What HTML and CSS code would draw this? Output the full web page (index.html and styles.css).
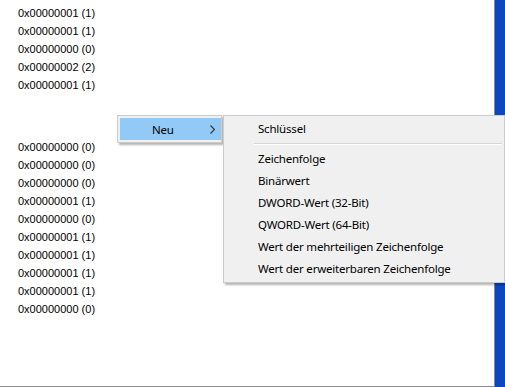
FILE: index.html
```html
<!DOCTYPE html>
<html lang="de">

<head>
    <meta charset="UTF-8">
    <title>Registrierungs-Editor</title>
    <link rel="stylesheet" href="styles.css">
</head>

<body>
    <div class="window">
        <div class="pane">
            <ul class="values">
                <li>0x00000001 (1)</li>
                <li>0x00000001 (1)</li>
                <li>0x00000000 (0)</li>
                <li>0x00000002 (2)</li>
                <li>0x00000001 (1)</li>
            </ul>
            <ul class="values second">
                <li>0x00000000 (0)</li>
                <li>0x00000000 (0)</li>
                <li>0x00000000 (0)</li>
                <li>0x00000001 (1)</li>
                <li>0x00000000 (0)</li>
                <li>0x00000001 (1)</li>
                <li>0x00000001 (1)</li>
                <li>0x00000001 (1)</li>
                <li>0x00000001 (1)</li>
                <li>0x00000000 (0)</li>
            </ul>

            <div class="menu menu-new">
                <div class="item active">
                    <span class="label">Neu</span>
                    <svg class="arrow" width="5" height="9" viewBox="0 0 5 9">
                        <path d="M0.5 0.5 L4.5 4.5 L0.5 8.5" fill="none" stroke="#333" stroke-width="1.1"/>
                    </svg>
                </div>
            </div>

            <div class="menu submenu">
                <div class="item">Schlüssel</div>
                <div class="separator"></div>
                <div class="item">Zeichenfolge</div>
                <div class="item">Binärwert</div>
                <div class="item">DWORD-Wert (32-Bit)</div>
                <div class="item">QWORD-Wert (64-Bit)</div>
                <div class="item">Wert der mehrteiligen Zeichenfolge</div>
                <div class="item">Wert der erweiterbaren Zeichenfolge</div>
            </div>
        </div>
        <div class="side"></div>
    </div>
</body>

</html>
```

FILE: styles.css
```css
body {
    margin: 0;
    background-color: #fff;
    font-family: "Liberation Sans", Arial, sans-serif;
}

.window {
    display: flex;
    width: 505px;
    height: 387px;
    overflow: hidden;
}

.pane {
    position: relative;
    width: 494px;
    height: 386px;
    border-right: 1px solid #8a8a8a;
    border-bottom: 1px solid #8a8a8a;
    background-color: #fff;
}

.side {
    flex: 1;
    background-color: #0b47bd;
}

.values {
    list-style: none;
    margin: 0;
    padding: 4px 0 0 18px;
    font-size: 11px;
    line-height: 18px;
    color: #000;
}

.values.second {
    padding-top: 44px;
}

.menu {
    position: absolute;
    background-color: #f0f0f0;
    border: 1px solid #cccccc;
    box-shadow: 2px 2px 2px rgba(0, 0, 0, 0.3);
    font-family: "Segoe UI", "Noto Sans", sans-serif;
    font-size: 11.5px;
    letter-spacing: -0.2px;
    color: #000;
    padding: 2px;
}

.menu-new {
    left: 117px;
    top: 115px;
    width: 101px;
    padding-right: 0;
}

.menu-new .item {
    display: flex;
    align-items: center;
    height: 22px;
    background-color: #91c9f7;
}

.menu-new .label {
    margin-left: 32px;
    flex: 1;
}

.menu-new .arrow {
    margin-right: 6px;
}

.submenu {
    left: 223px;
    top: 115px;
    width: 276px;
}

.submenu .item {
    height: 22px;
    line-height: 22px;
    padding-left: 32px;
}

.separator {
    height: 1px;
    margin: 3px 0 3px 28px;
    background-color: #d7d7d7;
    border-bottom: 1px solid #fff;
}
```
